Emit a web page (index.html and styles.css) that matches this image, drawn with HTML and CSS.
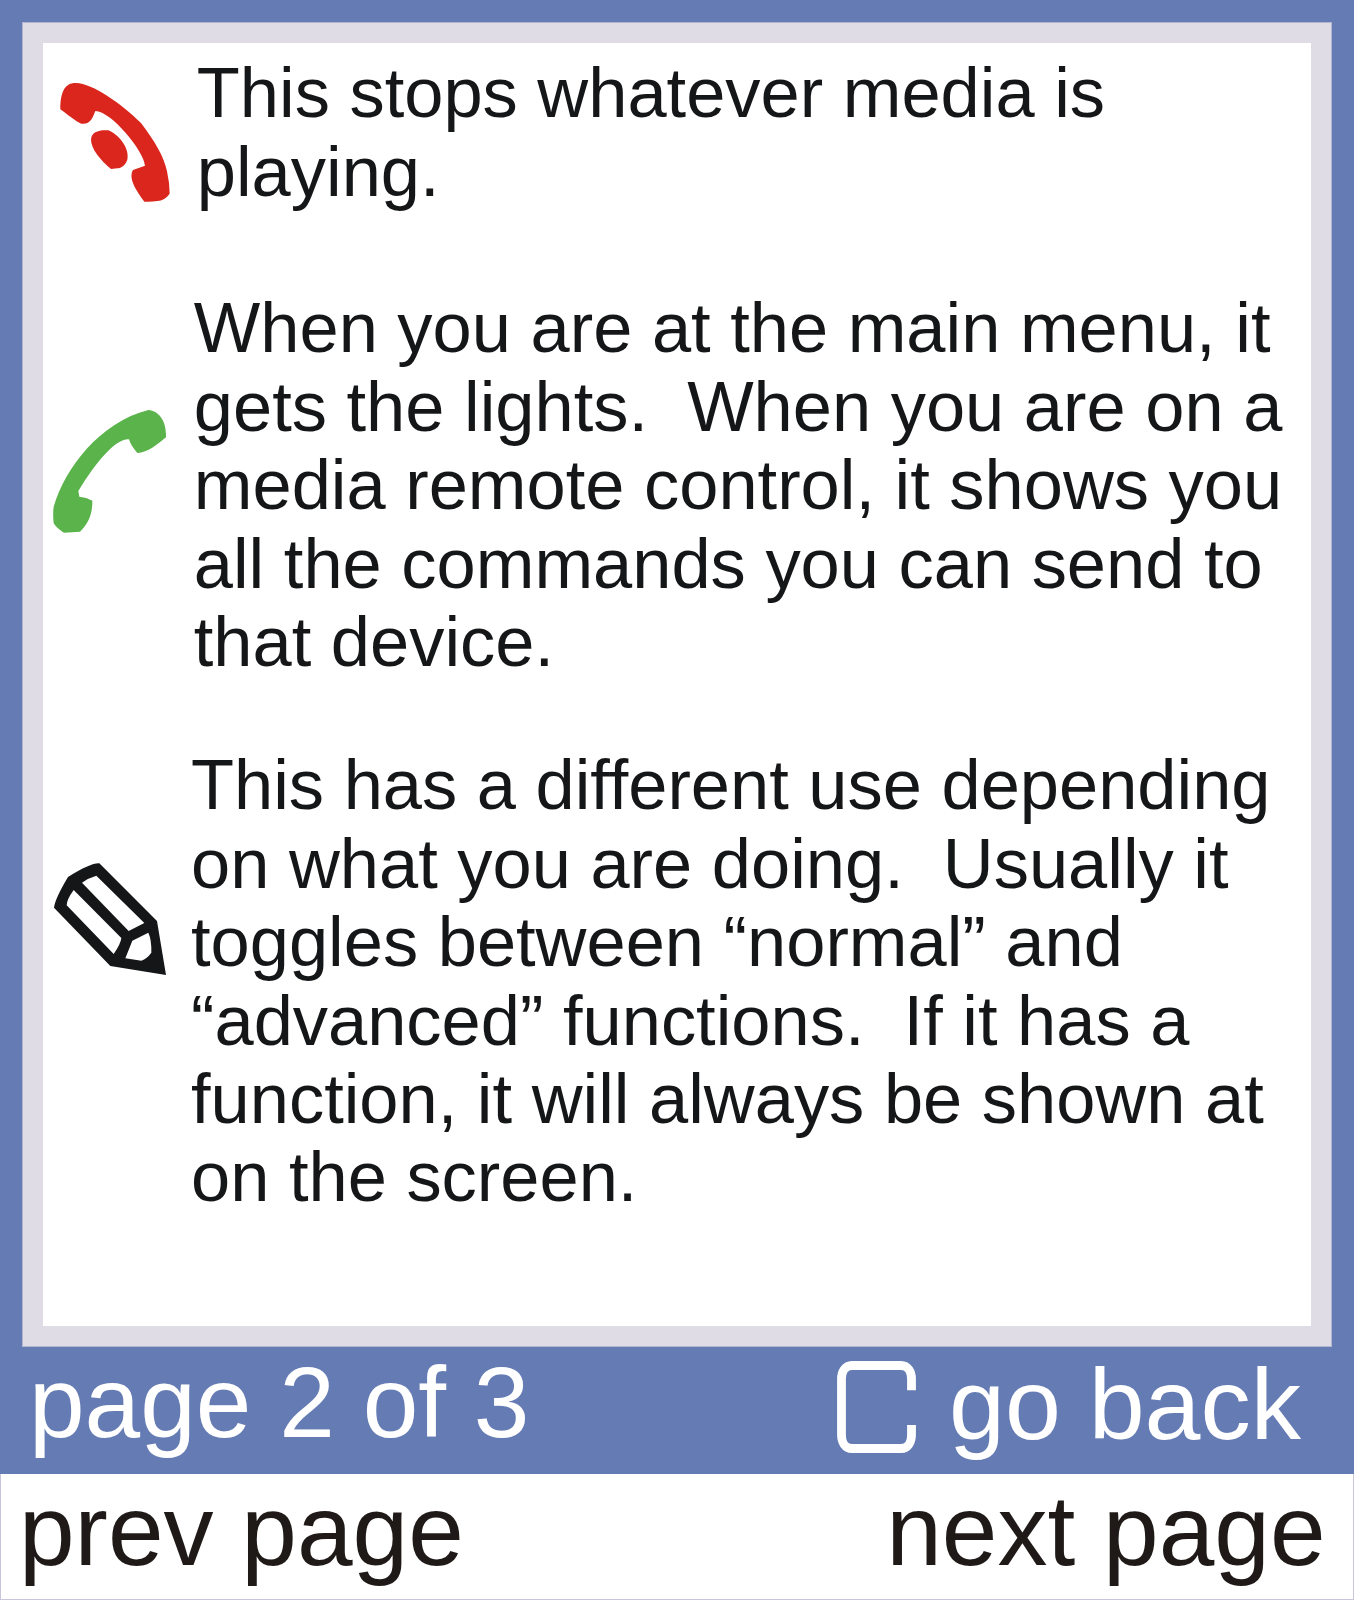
FILE: index.html
```html
<!DOCTYPE html>
<html lang="en">
<head>
<meta charset="utf-8">
<title>Help – page 2 of 3</title>
<link rel="stylesheet" href="styles.css">
</head>
<body>
<div class="screen">
  <main class="panel">
    <section class="row row-stop">
      <svg class="icon" viewBox="9 0 441 450" fill="#da261d">
        <path d="M61 118C61 62 77 38 108 39C158 40 245 102 303 159C343 212 372 259 381 304Q389 340 389 371Q374 392 352 393Q334 396 313 395C289 362 264 325 279 300L315 287C312 243 214 124 166 123C158 143 152 164 124 161C110 156 83 134 61 118Z"/>
        <path d="M205 181C241 197 269 237 262 269C257 284 244 295 232 295L213 297C183 272 153 237 153 209C154 185 178 179 205 181Z"/>
      </svg>
      <p class="text">This stops whatever media is<br>playing.</p>
    </section>
    <section class="row row-call">
      <svg class="icon" viewBox="9 0 441 450" fill="#5bb44b">
        <path d="M325 30C359 33 380 66 378 112C351 134 324 158 292 159Q273 138 267 118C231 114 172 179 115 273L118 290Q140 292 157 302C158 343 144 372 120 395L72 398Q52 387 41 370Q38 342 41 320C75 205 179 67 325 30Z"/>
      </svg>
      <p class="text">When you are at the main menu, it<br>gets the lights.&nbsp; When you are on a<br>media remote control, it shows you<br>all the commands you can send to<br>that device.</p>
    </section>
    <section class="row row-edit">
      <svg class="icon" viewBox="9 0 441 450" fill="#151617" fill-rule="evenodd">
        <path d="M84 81Q153 38 178 40L351 213L378 375L211 348L42 173Q45 146 84 81ZM126 98L266 243L313 219L169 77Q147 83 126 98ZM101 120Q80 149 80 166L221 312Q242 282 244 264ZM277 272L256 325L304 332Q321 326 334 308Q335 269 325 248Z"/>
      </svg>
      <p class="text">This has a different use depending<br>on what you are doing.&nbsp; Usually it<br>toggles between “normal” and<br>“advanced” functions.&nbsp; If it has a<br>function, it will always be shown at<br>on the screen.</p>
    </section>
  </main>
  <div class="status">
    <span class="page">page 2 of 3</span>
    <span class="back">
      <svg class="key" viewBox="0 0 79 92" fill="none" stroke="#fff" stroke-width="8.8">
        <path d="M74.5 29.3V18C74.5 11 71 4.5 64 4.5H15C8 4.5 4.5 11 4.5 18V74C4.5 81 8 87.5 15 87.5H64C71 87.5 74.5 81 74.5 74V64"/>
      </svg>
      <span class="back-label">go back</span>
    </span>
  </div>
  <nav class="softkeys">
    <span>prev page</span>
    <span>next page</span>
  </nav>
</div>
</body>
</html>
```
FILE: styles.css
```css
* { box-sizing: border-box; }

body {
  margin: 0;
  background: #fff;
  font-family: "Liberation Sans", Arial, sans-serif;
}

.screen {
  width: 1354px;
  height: 1600px;
  display: flex;
  flex-direction: column;
  background: #657bb4;
}

.panel {
  margin: 22px 22px 0;
  height: 1325px;
  flex: none;
  background: #fff;
  border: 21px solid #dfdce6;
  outline: 1px solid #b3b4d0;
  outline-offset: -1px;
}

.row {
  display: grid;
  grid-template-columns: 147px 1fr;
  align-items: start;
}

.row-stop { height: 245px; }
.row-call { height: 457px; }

.icon {
  display: block;
  width: 147px;
  height: 150px;
}

.row-stop .icon { margin-top: 27px; }
.row-call .icon { margin-top: 112px; }
.row-edit .icon { margin-top: 105px; }

.text {
  margin: 0;
  font-size: 70.45px;
  line-height: 78.4px;
  color: #151617;
  white-space: nowrap;
}

.row-stop .text { padding: 11.4px 0 0 6.8px; }
.row-call .text { padding: 1.4px 0 0 3.8px; }
.row-edit .text { padding: 1.4px 0 0 1px; }

.status {
  height: 127px;
  flex: none;
  display: flex;
  justify-content: space-between;
  align-items: flex-start;
  padding: 0 53px 0 29px;
  font-size: 100px;
  line-height: 110px;
  color: #fff;
  white-space: nowrap;
}

.back {
  display: flex;
  gap: 33px;
}

.back-label {
  margin-top: 2px;
  font-size: 100.5px;
}

.key {
  width: 79px;
  height: 92px;
  margin-top: 14px;
}

.softkeys {
  flex: 1;
  display: flex;
  justify-content: space-between;
  align-items: flex-start;
  padding: 1px 27.5px 0 18px;
  background: #fff;
  border: 1px solid #c9c6dc;
  border-top-width: 0;
  font-size: 100px;
  line-height: 110px;
  color: #1f1a17;
  white-space: nowrap;
}
```
